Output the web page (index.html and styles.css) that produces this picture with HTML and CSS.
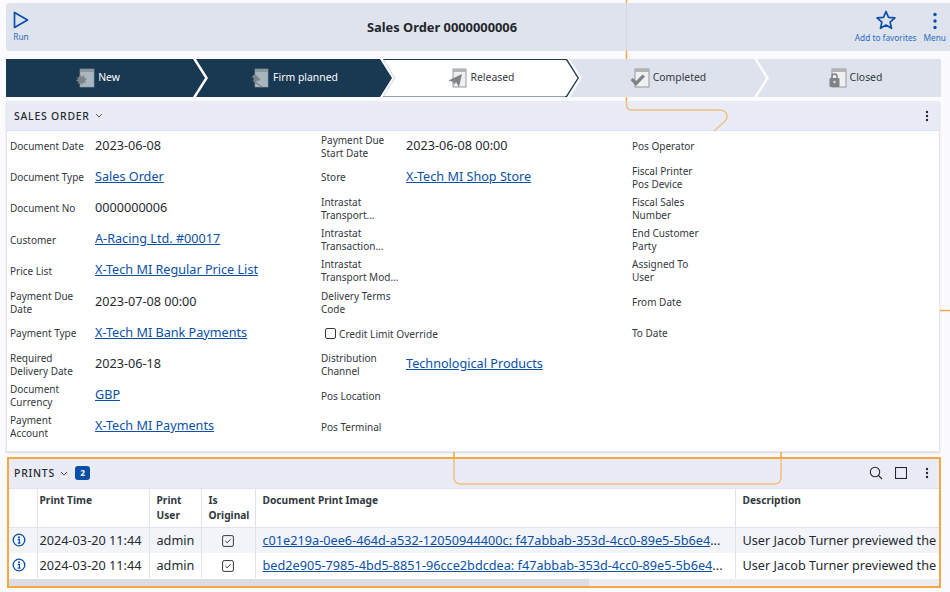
FILE: index.html
```html
<!DOCTYPE html>
<html lang="en">
<head>
<meta charset="utf-8">
<title>Sales Order 0000000006</title>
<link rel="stylesheet" href="styles.css">
</head>
<body>
<svg class="wires" width="950" height="592" viewBox="0 0 950 592" fill="none">
  <path class="wire-solid" d="M626.500 0V3M626.500 51V59M626.500 97V101"/>
  <path class="wire-faint" d="M626.500 3V51"/>
  <path class="wire-soft" d="M626.500 101V105Q626.500 110 632 110H718Q727 110 727 116Q727 120 723 123L714 131"/>
  <path class="wire-soft" d="M454 459V477Q454 484 461 484H774Q781 484 781 477V459"/>
  <path class="wire-solid" d="M454 452V457M781 452V457M940 310.500H950"/>
</svg>
<div class="page">
  <header class="topbar">
    <button class="tool tool-run" type="button">
      <svg width="16" height="18" viewBox="0 0 16 18" fill="none"><path class="ico" d="M1.500 1.500V16.500L14.500 9Z"/></svg>
      <span>Run</span>
    </button>
    <h1 class="title">Sales Order 0000000006</h1>
    <div class="tools-right">
      <button class="tool" type="button">
        <svg width="20" height="20" viewBox="0 0 20 20" fill="none"><path class="ico" d="M10 1.500L12.500 7.300L18.900 7.900L14.100 12.100L15.500 18.300L10 15.100L4.500 18.300L5.900 12.100L1.100 7.900L7.500 7.300Z"/></svg>
        <span>Add to favorites</span>
      </button>
      <button class="tool" type="button">
        <svg width="6" height="18" viewBox="0 0 6 18"><circle class="dot" cx="3" cy="2.500" r="1.700"/><circle class="dot" cx="3" cy="9" r="1.700"/><circle class="dot" cx="3" cy="15.500" r="1.700"/></svg>
        <span>Menu</span>
      </button>
    </div>
  </header>

  <nav class="steps">
    <div class="step step-done step-first">
      <svg class="step-ico" width="20" height="20" viewBox="0 0 20 20"><rect class="doc" x="5" y="1" width="14" height="18"/><rect class="doc-top" x="5" y="1" width="14" height="3"/><path class="mark" d="M1 9L3 10L5 7L7 9L9 7L9.500 10L12 10.500L10 12.500L11 15L8.500 14.500L7 17L5.500 15L3 16L3.500 13.500L0.500 13L3 11.500Z"/></svg>
      <span>New</span>
    </div>
    <div class="step step-done">
      <svg class="step-ico" width="20" height="20" viewBox="0 0 20 20"><rect class="doc" x="5" y="1" width="13" height="18"/><rect class="doc-top" x="5" y="1" width="13" height="3"/><path class="mark" d="M5 6L10.500 11.500L9 13L7.500 12.500L6 14L13 19L12 19.500L5 15L3.500 13.500L3 12L4 10.500L1.500 9Z"/></svg>
      <span>Firm planned</span>
    </div>
    <div class="step step-current">
      <svg class="step-ico" width="20" height="20" viewBox="0 0 20 20"><rect class="doc doc-light" x="5" y="1" width="13" height="18"/><rect class="doc-top doc-top-light" x="5" y="1" width="13" height="3"/><path class="mark" d="M0.500 12.500L14 6L11 19L8 14L6 17L5.500 14Z"/></svg>
      <span>Released</span>
    </div>
    <div class="step step-todo">
      <svg class="step-ico" width="20" height="20" viewBox="0 0 20 20"><rect class="doc doc-light" x="5" y="1" width="14" height="18"/><rect class="doc-top doc-top-light" x="5" y="1" width="14" height="3"/><path class="mark" d="M0.500 12L3 10L6 13L12.500 6.500L15 8.500L6 18Z"/></svg>
      <span>Completed</span>
    </div>
    <div class="step step-todo step-last">
      <svg class="step-ico" width="18" height="20" viewBox="0 0 18 20"><rect class="doc doc-light" x="3" y="1" width="14" height="18"/><rect class="doc-top doc-top-light" x="3" y="1" width="14" height="3"/><path class="shackle" d="M3 10.500V8.500A2.500 2.500 0 0 1 8 8.500V10.500"/><rect class="mark" x="0.500" y="10" width="10" height="9" rx="1"/><circle class="keyhole" cx="5.500" cy="14" r="1.300"/></svg>
      <span>Closed</span>
    </div>
  </nav>

  <section class="card">
    <div class="card-head">
      <span class="card-title">SALES ORDER</span>
      <svg class="chev" width="8" height="5" viewBox="0 0 8 5" fill="none"><path d="M1 1L4 4L7 1"/></svg>
      <svg class="kebab" width="4" height="12" viewBox="0 0 4 12"><circle cx="2" cy="2" r="1.200"/><circle cx="2" cy="6" r="1.200"/><circle cx="2" cy="10" r="1.200"/></svg>
    </div>
    <div class="form">
      <div class="col">
        <div class="field"><label>Document Date</label><span class="val">2023-06-08</span></div>
        <div class="field"><label>Document Type</label><a class="val" href="#">Sales Order</a></div>
        <div class="field"><label>Document No</label><span class="val">0000000006</span></div>
        <div class="field"><label>Customer</label><a class="val" href="#">A-Racing Ltd. #00017</a></div>
        <div class="field"><label>Price List</label><a class="val" href="#">X-Tech MI Regular Price List</a></div>
        <div class="field"><label>Payment Due Date</label><span class="val">2023-07-08 00:00</span></div>
        <div class="field"><label>Payment Type</label><a class="val" href="#">X-Tech MI Bank Payments</a></div>
        <div class="field"><label>Required Delivery Date</label><span class="val">2023-06-18</span></div>
        <div class="field"><label>Document Currency</label><a class="val" href="#">GBP</a></div>
        <div class="field"><label>Payment Account</label><a class="val" href="#">X-Tech MI Payments</a></div>
      </div>
      <div class="col">
        <div class="field"><label>Payment Due Start Date</label><span class="val">2023-06-08 00:00</span></div>
        <div class="field"><label>Store</label><a class="val" href="#">X-Tech MI Shop Store</a></div>
        <div class="field"><label>Intrastat Transport...</label></div>
        <div class="field"><label>Intrastat Transaction...</label></div>
        <div class="field"><label class="label-wide">Intrastat Transport Mod...</label></div>
        <div class="field"><label>Delivery Terms Code</label></div>
        <div class="field"><span class="check-wrap"><span class="box"></span><span class="check-label">Credit Limit Override</span></span></div>
        <div class="field"><label>Distribution Channel</label><a class="val" href="#">Technological Products</a></div>
        <div class="field"><label>Pos Location</label></div>
        <div class="field"><label>Pos Terminal</label></div>
      </div>
      <div class="col">
        <div class="field"><label>Pos Operator</label></div>
        <div class="field"><label>Fiscal Printer Pos Device</label></div>
        <div class="field"><label>Fiscal Sales Number</label></div>
        <div class="field"><label>End Customer Party</label></div>
        <div class="field"><label>Assigned To User</label></div>
        <div class="field"><label>From Date</label></div>
        <div class="field"><label>To Date</label></div>
      </div>
    </div>
  </section>

  <section class="prints">
    <div class="card-head prints-head">
      <span class="card-title">PRINTS</span>
      <svg class="chev" width="8" height="5" viewBox="0 0 8 5" fill="none"><path d="M1 1L4 4L7 1"/></svg>
      <span class="badge">2</span>
      <div class="head-tools">
        <svg class="tool-ico" width="14" height="14" viewBox="0 0 14 14" fill="none"><circle cx="6" cy="6" r="4.700"/><path d="M9.500 9.500L13 13"/></svg>
        <svg class="tool-ico" width="12" height="12" viewBox="0 0 12 12" fill="none"><rect x="0.500" y="0.500" width="11" height="11"/></svg>
        <svg class="kebab kebab-static" width="4" height="12" viewBox="0 0 4 12"><circle cx="2" cy="2" r="1.200"/><circle cx="2" cy="6" r="1.200"/><circle cx="2" cy="10" r="1.200"/></svg>
      </div>
    </div>
    <div class="table-wrap">
      <table class="grid">
        <colgroup><col class="c-info"><col class="c-time"><col class="c-user"><col class="c-orig"><col class="c-image"><col class="c-desc"></colgroup>
        <thead>
          <tr><th></th><th class="cell-time">Print Time</th><th>Print User</th><th>Is Original</th><th>Document Print Image</th><th>Description</th></tr>
        </thead>
        <tbody>
          <tr class="row-alt">
            <td class="cell-info"><svg width="14" height="14" viewBox="0 0 14 14" fill="none"><circle class="info-ring" cx="7" cy="7" r="5.800"/><circle class="info-dot" cx="7" cy="4.300" r="1"/><path class="info-bar" d="M5.800 6.500H7.400V10M5.800 10.200H8.400"/></svg></td>
            <td class="cell-time">2024-03-20 11:44</td><td>admin</td>
            <td class="cell-check"><svg width="12" height="12" viewBox="0 0 12 12" fill="none"><rect class="cb" x="0.600" y="0.600" width="10.800" height="10.800" rx="1.500"/><path class="cb" d="M3.300 6L5.200 7.800L8.700 4.200"/></svg></td>
            <td><a href="#">c01e219a-0ee6-464d-a532-12050944400c: f47abbab-353d-4cc0-89e5-5b6e4</a>...</td>
            <td>User Jacob Turner previewed the</td>
          </tr>
          <tr>
            <td class="cell-info"><svg width="14" height="14" viewBox="0 0 14 14" fill="none"><circle class="info-ring" cx="7" cy="7" r="5.800"/><circle class="info-dot" cx="7" cy="4.300" r="1"/><path class="info-bar" d="M5.800 6.500H7.400V10M5.800 10.200H8.400"/></svg></td>
            <td class="cell-time">2024-03-20 11:44</td><td>admin</td>
            <td class="cell-check"><svg width="12" height="12" viewBox="0 0 12 12" fill="none"><rect class="cb" x="0.600" y="0.600" width="10.800" height="10.800" rx="1.500"/><path class="cb" d="M3.300 6L5.200 7.800L8.700 4.200"/></svg></td>
            <td><a href="#">bed2e905-7985-4bd5-8851-96cce2bdcdea: f47abbab-353d-4cc0-89e5-5b6e4</a>...</td>
            <td>User Jacob Turner previewed the</td>
          </tr>
        </tbody>
      </table>
    </div>
    <div class="scrollbar"><div class="thumb"></div></div>
  </section>
</div>
</body>
</html>
```
FILE: styles.css
```css
* { box-sizing: border-box; }
html, body { margin: 0; height: 100%; }
body {
  background: #fbfbfe;
  font-family: "Noto Sans", "Open Sans", sans-serif;
  color: #262a30;
  overflow: hidden;
  position: relative;
}
a { color: #0a50a8; }

.wires { position: absolute; left: 0; top: 0; pointer-events: none; z-index: 2; }
.wire-solid { stroke: #f5a742; stroke-width: 1.500; }
.wire-faint { stroke: #d9dade; stroke-width: 1; }
.wire-soft { stroke: #f0c083; stroke-width: 1.500; }

.page { position: relative; z-index: 1; padding: 3px 0 0 6px; }

.topbar {
  height: 48px;
  background: #dfe3ee;
  border-radius: 4px 0 0 4px;
  display: flex;
  align-items: center;
  justify-content: space-between;
  padding: 0 4px 0 7px;
  position: relative;
}
.title {
  position: absolute;
  left: 0;
  width: 872px;
  margin: 0;
  text-align: center;
  font-size: 12.850px;
  font-weight: 700;
  color: #23272c;
  pointer-events: none;
}
.tool {
  border: 0;
  background: none;
  padding: 0;
  font: inherit;
  display: flex;
  flex-direction: column;
  align-items: center;
  color: #2a6cbd;
  gap: 2px;
}
.tool span { font-size: 8.300px; line-height: 12px; }
.tool-run { margin-top: -1px; }
.tools-right { display: flex; gap: 7px; align-items: flex-end; }
.ico { stroke: #0a50a8; stroke-width: 1.700; stroke-linejoin: round; }
.dot { fill: #0a50a8; }

.steps { display: flex; margin-top: 8px; height: 38px; width: 935px; }
.step {
  position: relative;
  width: 199px;
  flex: none;
  margin-left: -12px;
  display: flex;
  align-items: center;
  justify-content: center;
  gap: 3px;
  font-size: 10.400px;
  padding-left: 3px;
  clip-path: polygon(3px 0, calc(100% - 12px) 0, 100% 50%, calc(100% - 12px) 100%, 3px 100%, 15px 50%);
}
.step > * { position: relative; }
.step > span { top: -1px; }
.step-first { margin-left: 0; padding: 0 16px 0 0; clip-path: polygon(0 0, calc(100% - 12px) 0, 100% 50%, calc(100% - 12px) 100%, 0 100%); }
.step-last { flex: 1; padding-left: 16px; clip-path: polygon(3px 0, 100% 0, 100% 100%, 3px 100%, 15px 50%); }
.step-done { background: #193851; color: #fff; }
.step-todo { background: #dde2ed; color: #33383e; }
.step-current { background: #193851; color: #33383e; }
.step-current::before {
  content: "";
  position: absolute;
  inset: 1px 0;
  background: #fff;
  clip-path: polygon(0 0, calc(100% - 13px) 0, calc(100% - 1.500px) 50%, calc(100% - 13px) 100%, 0 100%);
}
.step-current::after {
  content: "";
  position: absolute;
  left: 0;
  right: 14px;
  bottom: 0;
  height: 1px;
  background: #8fa2b2;
}
.doc { fill: #a8b6c0; stroke: #8d9aa4; stroke-width: .6; }
.doc-light { fill: #eef0f2; stroke: #8f8f8f; stroke-width: .9; }
.doc-top { fill: #8e979e; }
.doc-top-light { fill: #b4b4b4; }
.mark { fill: #7f8386; }
.shackle { fill: none; stroke: #7f8386; stroke-width: 1.500; }
.keyhole { fill: #d8d8d8; }

.card {
  margin-top: 4px;
  width: 934px;
  height: 351px;
  background: #fff;
  border: 1px solid #e4e6ee;
  border-top: 0;
  border-radius: 3px 3px 0 0;
  box-shadow: 0 1px 2px rgba(60, 70, 90, .18);
}
.card-head {
  height: 30px;
  background: #e9ecf6;
  display: flex;
  align-items: center;
  padding: 0 10px 0 7px;
  border-bottom: 1px dotted #d5d9e6;
}
.card-title { font-size: 10.400px; letter-spacing: .8px; color: #262a30; font-weight: 500; }
.chev { margin-left: 5px; }
.chev path { stroke: #555b63; stroke-width: 1; }
.kebab { margin-left: auto; }
.kebab circle { fill: #24282d; }
.kebab-static { margin-left: 6px; }

.form { display: grid; grid-template-columns: 311px 311px 1fr; padding-left: 3px; }
.col { display: flex; flex-direction: column; }
.field { height: 31.200px; display: flex; align-items: center; }
.field label {
  width: 85px;
  padding-right: 9px;
  flex: none;
  font-size: 10px;
  line-height: 13px;
  color: #33383e;
}
.field .label-wide { padding-right: 3px; }
.val { font-size: 12.650px; line-height: 16px; margin-top: -4px; }
.check-wrap { display: flex; align-items: center; margin-left: 4px; }
.box { width: 11px; height: 11px; border: 1px solid #33383e; border-radius: 2px; margin-right: 3px; }
.check-label { font-size: 10.100px; color: #33383e; }

.prints {
  margin-top: 5px;
  width: 934px;
  height: 131px;
  border: 2px solid #f5a742;
  margin-left: 1px;
  background: #fff;
  position: relative;
  overflow: hidden;
}
.prints-head { padding: 0 10px 1px 5px; height: 30px; }
.badge {
  margin-left: 7px;
  background: #0a50a8;
  color: #fff;
  font-size: 8.300px;
  font-weight: 700;
  line-height: 14px;
  width: 15px;
  height: 14px;
  text-align: center;
  border-radius: 3px;
}
.head-tools { margin-left: auto; display: flex; align-items: center; gap: 12px; }
.tool-ico * { stroke: #24282d; stroke-width: 1.100; }
.table-wrap { overflow: hidden; }
.grid { border-collapse: collapse; table-layout: fixed; width: 1100px; }
.c-info { width: 28px; }
.c-time { width: 112px; }
.c-user { width: 52px; }
.c-orig { width: 54px; }
.c-image { width: 480px; }
.c-desc { width: 374px; }
.grid th {
  height: 38px;
  vertical-align: top;
  text-align: left;
  font-size: 10.200px;
  line-height: 15px;
  font-weight: 700;
  padding: 4px 7px 0;
  color: #33383e;
  border-right: 1px solid #dfe2ea;
  border-bottom: 1px solid #dfe2ea;
}
.grid td {
  height: 25.500px;
  font-size: 12.700px;
  padding: 0 7px;
  white-space: nowrap;
  overflow: hidden;
  border-right: 1px solid #dfe2ea;
}
.grid .cell-time { padding-left: 2px; }
.grid td:last-child, .grid th:last-child { border-right: 0; }
.row-alt td { background: #f2f4f9; }
.grid .cell-info { padding: 3px 0 0 3px; }
.grid .cell-check { text-align: center; padding: 3px 0 0; }
.info-ring { stroke: #0a50a8; stroke-width: 1.300; }
.info-dot { fill: #0a50a8; }
.info-bar { stroke: #0a50a8; stroke-width: 1.300; }
.cb { stroke: #33383e; stroke-width: 1; }
.scrollbar { position: absolute; left: 0; right: 0; bottom: 0; height: 7px; background: #ececf0; }
.thumb { width: 580px; height: 100%; background: #dcdde2; }
```
